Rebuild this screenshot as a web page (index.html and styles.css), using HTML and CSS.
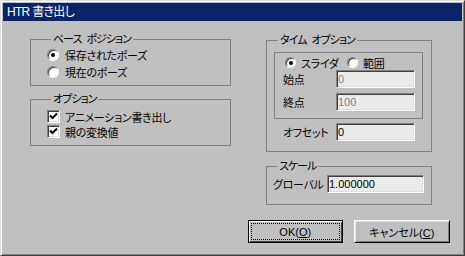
FILE: index.html
```html
<!DOCTYPE html>
<html lang="ja">
<head>
    <meta charset="UTF-8">
    <meta name="viewport" content="width=device-width, initial-scale=1.0">
    <title>HTR 書き出し</title>
    <link rel="stylesheet" href="styles.css">
</head>
<body>
    <div class="window">
        <div class="titlebar">HTR 書き出し</div>

        <div class="content">
            <!-- 左側: ベース ポジション / オプション -->
            <div class="col-left">
                <fieldset class="group group-base">
                    <legend>ベース ポジション</legend>
                    <label class="opt"><span class="radio checked"></span>保存されたポーズ</label>
                    <label class="opt"><span class="radio"></span>現在のポーズ</label>
                </fieldset>

                <fieldset class="group group-options">
                    <legend>オプション</legend>
                    <label class="opt opt-check">
                        <span class="check"><svg width="9" height="9" viewBox="0 0 9 9"><path d="M1 3.5 L3.5 6 L8 1.5" fill="none" stroke="#000" stroke-width="2"/></svg></span>アニメーション書き出し
                    </label>
                    <label class="opt opt-check">
                        <span class="check"><svg width="9" height="9" viewBox="0 0 9 9"><path d="M1 3.5 L3.5 6 L8 1.5" fill="none" stroke="#000" stroke-width="2"/></svg></span>親の変換値
                    </label>
                </fieldset>
            </div>

            <!-- 右側: タイム オプション / スケール / ボタン -->
            <div class="col-right">
                <fieldset class="group group-time">
                    <legend>タイム オプション</legend>
                    <div class="inner-box">
                        <div class="radio-row">
                            <label class="opt"><span class="radio checked"></span>スライダ</label>
                            <label class="opt"><span class="radio"></span>範囲</label>
                        </div>
                        <div class="field-row">
                            <span class="field-label">始点</span>
                            <input class="field" type="text" value="0" disabled>
                        </div>
                        <div class="field-row field-row-gap">
                            <span class="field-label">終点</span>
                            <input class="field" type="text" value="100" disabled>
                        </div>
                    </div>
                    <div class="field-row offset-row">
                        <span class="field-label">オフセット</span>
                        <input class="field" type="text" value="0">
                    </div>
                </fieldset>

                <fieldset class="group group-scale">
                    <legend>スケール</legend>
                    <div class="field-row">
                        <span class="field-label scale-label">グローバル</span>
                        <input class="field field-wide" type="text" value="1.000000">
                    </div>
                </fieldset>

                <div class="buttons">
                    <button class="btn btn-default" type="button"><span class="focus">OK(<u>O</u>)</span></button>
                    <button class="btn btn-cancel" type="button"><span>キャンセル(<u>C</u>)</span></button>
                </div>
            </div>
        </div>
    </div>
</body>
</html>
```

FILE: styles.css
```css
body {
    margin: 0;
    background-color: #c0c0c0;
    font-family: "Liberation Sans", "Noto Sans CJK JP", sans-serif;
    font-size: 11px;
    letter-spacing: -0.3px;
    font-feature-settings: "palt";
    color: #000;
}
.window {
    box-sizing: border-box;
    width: 465px;
    height: 256px;
    background-color: #c0c0c0;
    border: 1px solid;
    border-color: #dfdfdf #404040 #404040 #dfdfdf;
    box-shadow: inset 1px 1px #fff, inset -1px -1px #808080;
    padding: 2px;
}
.titlebar {
    height: 18px;
    line-height: 18px;
    padding-left: 4px;
    background-color: #0a246a;
    color: #fff;
    font-size: 12px;
    letter-spacing: -0.7px;
}
.content {
    display: flex;
    gap: 17px;
    padding: 11px 0 0 27px;
}
.col-left {
    width: 201px;
}
.col-right {
    width: 202px;
    margin-top: 1px;
}

/* グループボックス */
.group {
    box-sizing: border-box;
    margin: 0;
    padding: 0;
    min-width: 0;
    border: 1px solid #808080;
}
.group legend {
    height: 14px;
    line-height: 14px;
    padding: 0 2px;
    margin-left: 4px;
    letter-spacing: -1px;
    word-spacing: 3px;
}
.group-base {
    padding: 0 0 5px 16px;
}
.group-base .opt {
    height: 17px;
}
.group-options {
    margin-top: 6px;
    padding: 3px 0 6px 16px;
}
.opt {
    display: flex;
    align-items: center;
    height: 15px;
    white-space: nowrap;
}

/* ラジオボタン */
.radio {
    box-sizing: border-box;
    position: relative;
    flex: none;
    width: 12px;
    height: 12px;
    margin-right: 6px;
    border-radius: 50%;
    background-color: #fff;
    border: 1px solid;
    border-color: #808080 #fff #fff #808080;
    box-shadow: inset 1px 1px #404040;
}
.radio.checked::after {
    content: "";
    position: absolute;
    left: 3px;
    top: 3px;
    width: 4px;
    height: 4px;
    border-radius: 50%;
    background-color: #000;
}

/* チェックボックス */
.check {
    box-sizing: border-box;
    display: flex;
    flex: none;
    align-items: center;
    justify-content: center;
    width: 13px;
    height: 13px;
    margin-right: 5px;
    background-color: #fff;
    border: 1px solid;
    border-color: #808080 #fff #fff #808080;
    box-shadow: inset 1px 1px #404040, inset -1px -1px #dfdfdf;
}

/* タイム オプション */
.group-time {
    width: 166px;
    margin-left: 18px;
    padding: 5px 8px 10px 7px;
}
.inner-box {
    border: 1px solid #808080;
    padding: 2px 7px 7px 8px;
}
.radio-row {
    display: grid;
    grid-template-columns: 62px auto;
    height: 15px;
    padding-left: 2px;
}
.radio-row .radio {
    width: 11px;
    height: 11px;
    margin-right: 5px;
}
.radio-row .radio.checked::after {
    left: 2.5px;
    top: 2.5px;
}
.field-row {
    display: flex;
    align-items: center;
    height: 18px;
}
.field-row-gap {
    margin-top: 5px;
}
.offset-row {
    margin-top: 4px;
    padding-left: 9px;
}
.field-label {
    flex: none;
    width: 53px;
    white-space: nowrap;
}
.field {
    box-sizing: border-box;
    flex: none;
    width: 79px;
    height: 18px;
    margin: 0;
    padding: 0 1px;
    font: inherit;
    letter-spacing: 0;
    color: #000;
    background-color: #ebebeb;
    border: 1px solid;
    border-color: #808080 #fff #fff #808080;
    box-shadow: inset 1px 1px #404040, inset -1px -1px #dfdfdf;
    outline: none;
}
.field:disabled {
    color: #808080;
    -webkit-text-fill-color: #808080;
    opacity: 1;
}

/* スケール */
.group-scale {
    width: 166px;
    margin: 7px 0 0 18px;
    padding: 2px 7px 11px 6px;
}
.scale-label {
    width: 54px;
}
.field-wide {
    width: 97px;
}

/* ボタン */
.buttons {
    display: flex;
    gap: 11px;
    margin-top: 15px;
}
.btn {
    box-sizing: border-box;
    display: flex;
    align-items: center;
    justify-content: center;
    width: 95px;
    height: 23px;
    padding: 2px;
    font: inherit;
    color: #000;
    background-color: #c0c0c0;
    border: 1px solid;
    border-color: #fff #000 #000 #fff;
    box-shadow: inset 1px 1px #dfdfdf, inset -1px -1px #808080;
}
.btn-default {
    border-color: #000;
    box-shadow: inset 1px 1px #fff, inset -1px -1px #404040;
}
.btn-cancel {
    width: 97px;
}
.focus {
    box-sizing: border-box;
    display: flex;
    align-items: center;
    justify-content: center;
    width: 100%;
    height: 100%;
    border: 1px dotted #000;
}
```
